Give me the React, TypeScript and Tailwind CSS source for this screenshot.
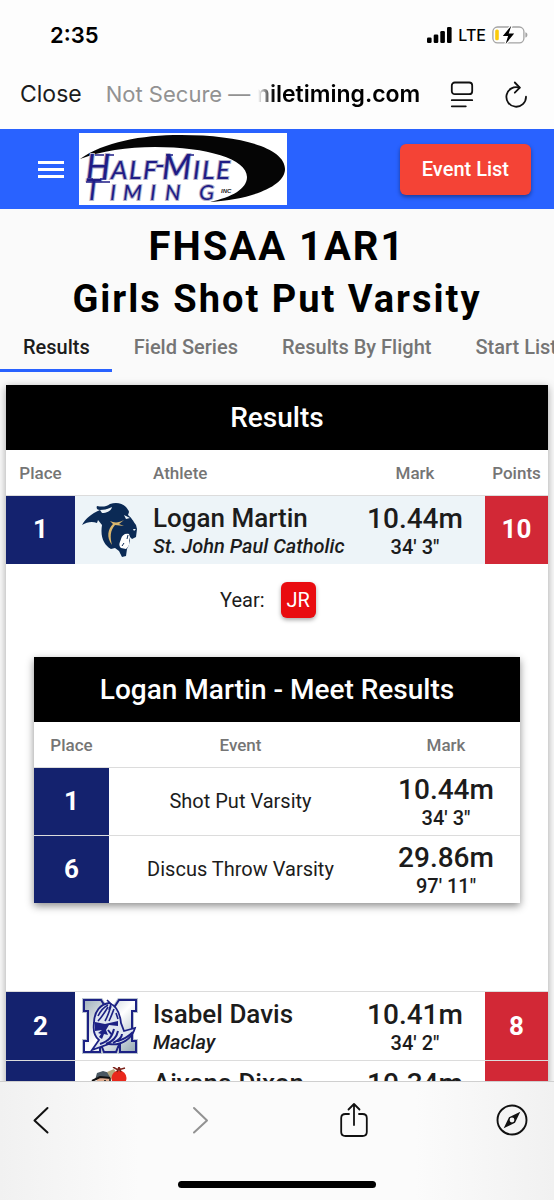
import React from 'react';

interface ResultRow {
  place: string;
  athlete: string;
  school: string;
  mark: string;
  imperial: string;
  points: string;
  logo: React.ReactNode;
}

interface MeetResult {
  place: string;
  event: string;
  mark: string;
  imperial: string;
}

const tabs = ['Results', 'Field Series', 'Results By Flight', 'Start Lists'];

const meetResults: MeetResult[] = [
  { place: '1', event: 'Shot Put Varsity', mark: '10.44m', imperial: '34\' 3"' },
  { place: '6', event: 'Discus Throw Varsity', mark: '29.86m', imperial: '97\' 11"' },
];

function SignalIcon() {
  return (
    <svg width="25" height="16" viewBox="0 0 25 16" fill="#000" aria-hidden="true">
      <rect x="0" y="10.5" width="4.6" height="5.5" rx="1.3" />
      <rect x="6.7" y="7.5" width="4.6" height="8.5" rx="1.3" />
      <rect x="13.3" y="4" width="4.6" height="12" rx="1.3" />
      <rect x="20" y="0" width="4.6" height="16" rx="1.3" />
    </svg>
  );
}

function BatteryIcon() {
  return (
    <svg width="36" height="20" viewBox="0 0 36 20" aria-hidden="true">
      <rect x="0.9" y="2" width="31" height="15.8" rx="4.6" fill="none" stroke="#a3a3a3" strokeWidth="1.3" />
      <path d="M33.4 7.3c1.4.5 2 1.4 2 2.6s-.6 2.1-2 2.6z" fill="#a3a3a3" />
      <rect x="3.2" y="4.5" width="3.6" height="10.8" rx="1.5" fill="#fbcb0a" />
      <path d="M19.3.8 10.8 11h5.3l-2.500 8L22.200 8.600h-5.500z" fill="#000" stroke="#fff" strokeWidth="2.400" strokeLinejoin="round" paintOrder="stroke" />
    </svg>
  );
}

function PageMenuIcon() {
  return (
    <svg width="24" height="28" viewBox="0 0 24 28" fill="none" stroke="#111" strokeWidth="1.8" strokeLinecap="round" aria-hidden="true">
      <rect x="1.8" y="1.5" width="20.4" height="11.7" rx="3" />
      <path d="M1.8 19.2h20.4M1.8 25.3h14" />
    </svg>
  );
}

function ReloadIcon() {
  return (
    <svg width="24" height="28" viewBox="0 0 24 28" fill="none" stroke="#111" strokeWidth="1.8" strokeLinecap="round" strokeLinejoin="round" aria-hidden="true">
      <path d="M15.5 6.7A9.8 9.8 0 1 0 22 15.7" />
      <path d="M10.8 1.5l5 5.1-5 5.1" />
    </svg>
  );
}

function HalfMileLogo() {
  return (
    <svg viewBox="0 0 208 72" className="h-[72px] w-[208px] bg-white" role="img" aria-label="Half-Mile Timing Inc">
      <path d="M1 26C25 9 62 2 102 2c60 0 104 13 104 34 0 17-32 30-75 33 22-5 37-13 37-25 0-18-40-30-92-30C48 14 22 18 1 26z" fill="#050505" />
      <g fontFamily="Lato, sans-serif" fontStyle="italic" fill="#1f1c86" stroke="#b4b4cc" strokeWidth="2" paintOrder="stroke">
        <text x="7" y="46" fontSize="34">H</text>
        <text x="32" y="46" fontSize="26">A</text>
        <text x="50" y="46" fontSize="26">L</text>
        <text x="64" y="46" fontSize="26">F</text>
        <text x="76" y="42" fontSize="28">-</text>
        <text x="83" y="46" fontSize="34">M</text>
        <text x="114" y="46" fontSize="26">I</text>
        <text x="123" y="46" fontSize="26">L</text>
        <text x="137" y="46" fontSize="26">E</text>
        <text x="6" y="67" fontSize="28">T</text>
        <text x="31" y="67" fontSize="22">I</text>
        <text x="44" y="67" fontSize="22">M</text>
        <text x="71" y="67" fontSize="22">I</text>
        <text x="86" y="67" fontSize="22">N</text>
        <text x="120" y="67" fontSize="22">G</text>
      </g>
      <path d="M16 22h9M27 22h8M7 49h24M8 46h6M21 46h6M87 22h7M109 22h6" stroke="#1f1c86" strokeWidth="1.5" />
      <text x="142" y="60" fontSize="6" fontWeight="700" fontStyle="italic" fontFamily="'Liberation Sans', sans-serif" fill="#222">INC</text>
    </svg>
  );
}

function PantherLogo() {
  return (
    <svg width="56" height="56" viewBox="0 0 56 56" role="img" aria-label="St. John Paul Catholic">
      <path d="M0 23C4 16 9 12 18 8c-3 0-4-2-3-4 5 1 9 1 13-2 6-2 12-1 16 3 1 2 3 3 3 5l-1 3c4 3 5 6 8 10l1 4-1 8-4 2-2-2c0 5-1 8-3 12l-1 7-4 1-3-6-4-3-4 1C22 43 18 35 20 23l-4-5-1 3C10 19 5 20 0 23z" fill="#0b2a55" />
      <path d="M18 8c5 0 8-1 12-3-1 4-5 6-10 6zM42 13l6 3-4 1zM51 27l3 0-2 2z" fill="#edf4f8" />
      <path d="M28 19c4 2 9 2 14-1l-5 4 5 2-9-1c-5 6-5 12-3 20-6-8-4-16 1-21z" fill="#d9b66d" />
      <path d="M39 37c1-4 4-6 8-5l1 3-1 4c1 4-1 6-3 8l-5-1c-3-3-1-6 0-9z" fill="#fff" />
      <path d="M46 33l-1 4M40 44l2-3" stroke="#0b2a55" strokeWidth="1" fill="none" />
    </svg>
  );
}

function MaclayLogo() {
  return (
    <svg width="56" height="56" viewBox="0 0 56 56" role="img" aria-label="Maclay">
      <defs>
        <linearGradient id="steel" x1="0" y1="0" x2="1" y2="1">
          <stop offset="0" stopColor="#9fb0bb" />
          <stop offset="0.5" stopColor="#fff" />
          <stop offset="1" stopColor="#93a7b3" />
        </linearGradient>
      </defs>
      <path d="M2 2h17l9 14 9-14h17v11h-4v30h4v11H38V44l-4 10H22l-4-10v10H2V43h4V13H2z" fill="url(#steel)" stroke="#b9c3d0" strokeWidth="4" />
      <path d="M2 2h17l9 14 9-14h17v11h-4v30h4v11H38V44l-4 10H22l-4-10v10H2V43h4V13H2z" fill="url(#steel)" stroke="#1c2184" strokeWidth="2" />
      <path d="M12 25C12 13 19 6 27 5c8 3 11 10 12 20l3 8 11-3c-3 11-14 18-26 16l-17 6 7-10c-5-4-6-10-5-17z" fill="#dfe6f0" stroke="#1c2184" strokeWidth="1.8" />
      <path d="M25 2l4 4-2 6M16 18C19 12 22 9 26 7M16 23c4-4 7-9 10-14M29 8c-2 6-3 10-6 15M32 11c-2 5-3 8-5 12M34 15l2 6" stroke="#1c2184" strokeWidth="1.6" fill="none" />
      <path d="M13 24l10 2 13-3v5l-9-1-3 5 2 5-4-1-2 5-3-2 2-3-3-1 4-3-7 1z" fill="#1c2184" />
      <path d="M18 46c9-3 12-7 14-15M24 46c8-3 11-8 12-13M31 45c6-3 9-6 9-9M36 43c7-2 11-5 15-9M26 32l4 5" stroke="#1c2184" strokeWidth="2" fill="none" />
    </svg>
  );
}

function MascotLogo() {
  return (
    <svg width="56" height="56" viewBox="0 0 56 56" role="img" aria-label="School mascot">
      <path d="M13 13l2-7 6-2 7 2 1 4-4 4z" fill="#4a5862" />
      <path d="M15 10h13l2 13H14z" fill="#e2ad8e" />
      <path d="M10 14l8-4 11 1" stroke="#111" strokeWidth="2" fill="none" />
      <path d="M18 14v3M23 13v3M28 12v4" stroke="#111" strokeWidth="1.5" />
      <path d="M25 5l7-3 3 5-6 5z" fill="#b6a87c" />
      <circle cx="37" cy="11" r="7.5" fill="#e9281c" />
      <path d="M31 0l5 3 7-2M35 5l2-5 2 5" stroke="#7c231b" strokeWidth="1.5" fill="none" />
    </svg>
  );
}

const rows: ResultRow[] = [
  { place: '1', athlete: 'Logan Martin', school: 'St. John Paul Catholic', mark: '10.44m', imperial: '34\' 3"', points: '10', logo: <PantherLogo /> },
  { place: '2', athlete: 'Isabel Davis', school: 'Maclay', mark: '10.41m', imperial: '34\' 2"', points: '8', logo: <MaclayLogo /> },
  { place: '3', athlete: 'Aiyana Dixon', school: '', mark: '10.34m', imperial: '', points: '6', logo: <MascotLogo /> },
];

function Mark({ mark, imperial }: { mark: string; imperial: string }) {
  return (
    <>
      <div className="text-[28px] leading-8 font-medium">{mark}</div>
      <div className="h-6 text-xl leading-6 font-medium">{imperial}</div>
    </>
  );
}

function MeetResults() {
  return (
    <section className="mx-7 bg-white shadow-[0_3px_8px_rgba(0,0,0,0.45)]">
      <h3 className="bg-black text-center text-[28px] leading-[65px] font-medium text-white">Logan Martin - Meet Results</h3>
      <table className="w-full table-fixed border-collapse text-center">
        <colgroup>
          <col className="w-[75px]" />
          <col />
          <col className="w-[148px]" />
        </colgroup>
        <thead>
          <tr className="h-[45px] text-[17px] text-[#757575]">
            <th className="pt-[2px] font-medium">Place</th>
            <th className="pt-[2px] font-medium">Event</th>
            <th className="pt-[2px] font-medium">Mark</th>
          </tr>
        </thead>
        <tbody>
          {meetResults.map(r => (
            <tr key={r.place} className="h-[68px] border-t border-[#dcdcdc]">
              <td className="bg-[#14226e] text-[26px] font-bold text-white">{r.place}</td>
              <td className="text-xl">{r.event}</td>
              <td className="pt-[2px]"><Mark mark={r.mark} imperial={r.imperial} /></td>
            </tr>
          ))}
        </tbody>
      </table>
    </section>
  );
}

function ResultsTable() {
  return (
    <section className="mx-[6px] bg-white shadow-[0_2px_8px_rgba(0,0,0,0.35)]">
      <h2 className="bg-black text-center text-[28px] leading-[65px] font-medium text-white">Results</h2>
      <table className="w-full table-fixed border-collapse text-center">
        <colgroup>
          <col className="w-[69px]" />
          <col className="w-[70px]" />
          <col />
          <col className="w-[132px]" />
          <col className="w-[63px]" />
        </colgroup>
        <thead>
          <tr className="h-[45px] text-[17px] text-[#757575]">
            <th className="pt-[2px] font-medium">Place</th>
            <th aria-label="School logo" />
            <th className="pt-[2px] pl-2 text-left font-medium">Athlete</th>
            <th className="pt-[2px] pr-2 font-medium">Mark</th>
            <th className="pt-[2px] font-medium">Points</th>
          </tr>
        </thead>
        <tbody>
          {rows.map((r, idx) => (
            <React.Fragment key={r.place}>
              <tr className={idx === 0 ? 'h-[69px] border-t border-[#dcdcdc] bg-[#edf4f8]' : 'h-[69px] border-t border-[#dcdcdc]'}>
                <td className="bg-[#14226e] text-[26px] font-bold text-white">{r.place}</td>
                <td className="pl-[7px]">{r.logo}</td>
                <td className="pl-2 text-left whitespace-nowrap">
                  <div className="text-[26px] leading-8 font-medium">{r.athlete}</div>
                  <div className="h-6 text-xl leading-6 font-medium italic">{r.school}</div>
                </td>
                <td className="pt-[2px] pr-2"><Mark mark={r.mark} imperial={r.imperial} /></td>
                <td className="bg-[#d22836] text-[26px] font-bold text-white">{r.points}</td>
              </tr>
              {idx === 0 && (
                <tr>
                  <td colSpan={5} className="pt-[18px] pb-[88px]">
                    <div className="mb-[39px] flex items-center justify-center gap-4 pr-[18px] text-xl">
                      <span>Year:</span>
                      <span className="rounded-md bg-[#e90c10] px-[6px] text-xl leading-9 text-white shadow-[0_2px_4px_rgba(0,0,0,0.35)]">JR</span>
                    </div>
                    <MeetResults />
                  </td>
                </tr>
              )}
            </React.Fragment>
          ))}
        </tbody>
      </table>
    </section>
  );
}

export default function App() {
  return (
    <div className="flex h-screen flex-col overflow-hidden bg-[#fafafa] font-['Roboto',sans-serif] text-[#1c1c1c]">
      {/* Phone status bar and in-app browser bar */}
      <div className="shrink-0 bg-[#fdfdfd] font-['Inter',sans-serif]">
        <div className="flex h-[70px] items-center justify-between pr-[26px] pl-[50px] text-black">
          <time className="text-[22px] font-semibold">2:35</time>
          <div className="flex items-center gap-[6px]">
            <SignalIcon />
            <span className="text-base font-medium">LTE</span>
            <BatteryIcon />
          </div>
        </div>
        <div className="flex h-[59px] items-center pr-[26px] pb-[10px] pl-5 text-[23px]">
          <button type="button">Close</button>
          <div className="ml-6 flex flex-1 items-center whitespace-nowrap">
            <span className="text-[22px] text-[#929292]">Not Secure —</span>
            <div className="ml-2 flex w-[162px] justify-end overflow-hidden font-semibold text-black [mask-image:linear-gradient(to_right,transparent,black_16px)]">
              halfmiletiming.com
            </div>
          </div>
          <button type="button" aria-label="Page menu" className="mr-[30px]"><PageMenuIcon /></button>
          <button type="button" aria-label="Reload"><ReloadIcon /></button>
        </div>
      </div>

      <header className="flex h-20 shrink-0 items-center bg-[#2962ff] pr-[23px] pl-[38px]">
        <button type="button" aria-label="Menu" className="mr-[15px] flex w-[26px] flex-col gap-1">
          <span className="h-[3px] bg-white" />
          <span className="h-[3px] bg-white" />
          <span className="h-[3px] bg-white" />
        </button>
        <HalfMileLogo />
        <button type="button" className="ml-auto h-[51px] rounded-md bg-[#f44336] px-[22px] text-xl font-medium text-white shadow-[0_2px_4px_rgba(0,0,0,0.4)]">
          Event List
        </button>
      </header>

      <main className="min-h-0 flex-1 overflow-hidden">
        <h1 className="pt-3 text-center font-bold text-black">
          <span className="block text-[40px] leading-[52px] tracking-[2px]">FHSAA 1AR1</span>
          <span className="block text-[38px] leading-[52px] tracking-[2px]">Girls Shot Put Varsity</span>
        </h1>
        <nav className="mb-[13px] flex h-[47px] overflow-hidden text-xl font-medium whitespace-nowrap">
          {tabs.map((tab, idx) => (
            <button
              key={tab}
              type="button"
              className={idx === 0 ? 'shrink-0 border-b-[3px] border-[#2962ff] pr-[22px] pl-[23px]' : 'shrink-0 border-b-[3px] border-transparent px-[22px] text-[#757575]'}
            >
              {tab}
            </button>
          ))}
        </nav>
        <ResultsTable />
      </main>

      <footer className="flex h-[119px] shrink-0 flex-col items-center justify-between border-t border-[#cfcfcf] bg-[linear-gradient(to_right,#f1f1f1,#fbfbfb_25%,#fbfbfb_75%,#f1f1f1)] pt-5 pb-3">
        <div className="flex w-full items-center justify-between px-[26px]">
          <button type="button" aria-label="Back">
            <svg width="30" height="30" viewBox="0 0 30 30" fill="none" stroke="#111" strokeWidth="2" strokeLinecap="round" strokeLinejoin="round">
              <path d="M21.5 3 8.5 15.500l13 12" />
            </svg>
          </button>
          <button type="button" aria-label="Forward">
            <svg width="30" height="30" viewBox="0 0 30 30" fill="none" stroke="#929292" strokeWidth="2" strokeLinecap="round" strokeLinejoin="round">
              <path d="M11 3l13 12.5-13 12" />
            </svg>
          </button>
          <button type="button" aria-label="Share">
            <svg width="30" height="36" viewBox="0 0 30 36" fill="none" stroke="#111" strokeWidth="1.8" strokeLinecap="round" strokeLinejoin="round">
              <path d="M10 12H6.5C3.5 12 2.2 13.5 2.2 16v14c0 2.5 1.3 4 4.3 4h17c3 0 4.3-1.5 4.3-4V16c0-2.5-1.3-4-4.3-4H20" />
              <path d="M15 23V2M9.5 7.5 15 2l5.5 5.5" />
            </svg>
          </button>
          <button type="button" aria-label="Open in browser">
            <svg width="32" height="32" viewBox="0 0 32 32" fill="none">
              <circle cx="16" cy="16" r="14.5" stroke="#111" strokeWidth="1.9" />
              <path fillRule="evenodd" d="M24.3 7.7 19 18.8 7.7 24.3 13 13.2zM16 13.6a2.4 2.4 0 1 0 0 4.8 2.4 2.4 0 0 0 0-4.800z" fill="#111" />
            </svg>
          </button>
        </div>
        <div className="h-[7px] w-[198px] rounded-full bg-black" />
      </footer>
    </div>
  );
}
